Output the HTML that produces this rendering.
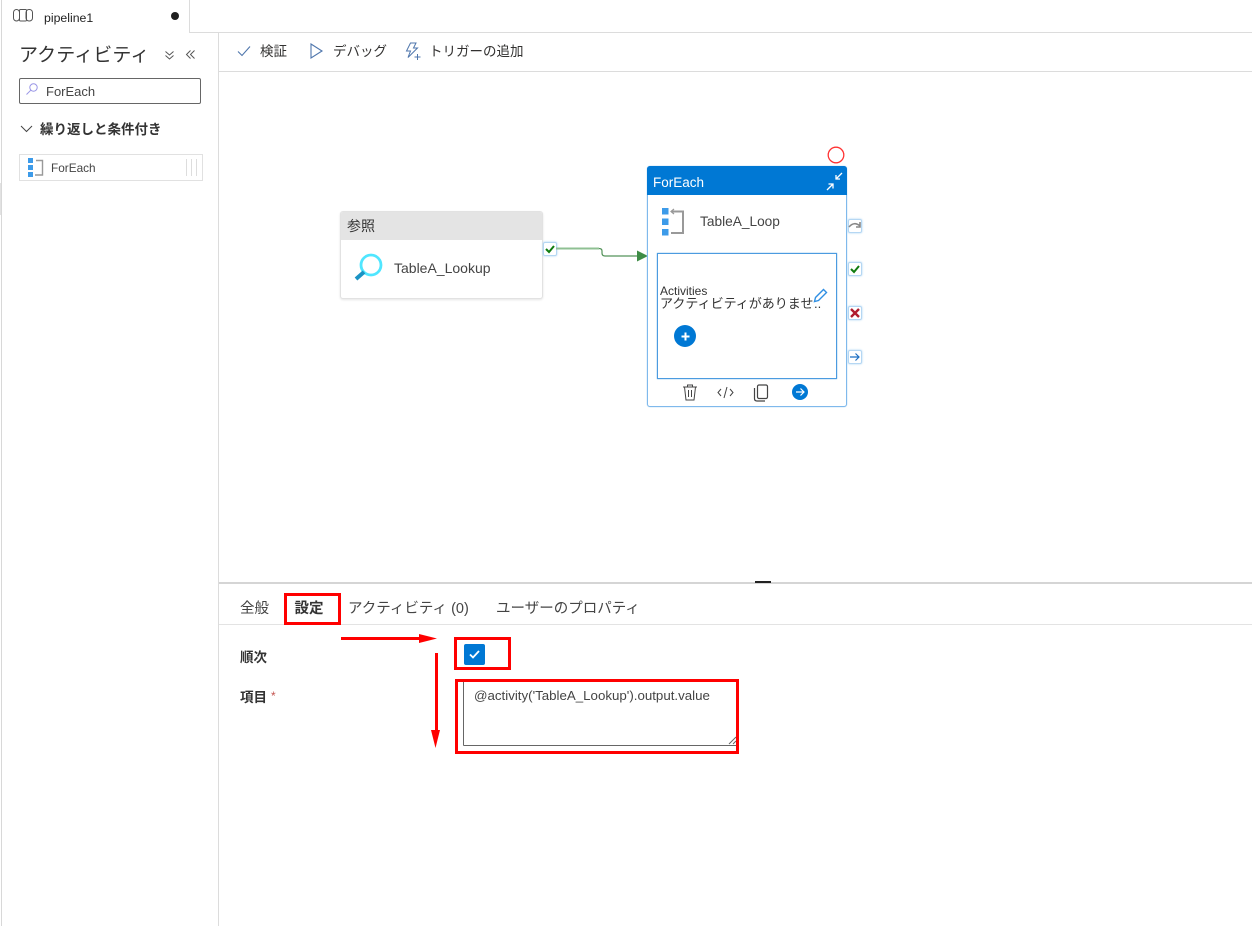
<!DOCTYPE html>
<html lang="ja"><head><meta charset="utf-8"><title>pipeline1</title>
<style>
html,body{margin:0;padding:0;background:#fff}
body{width:1252px;height:926px;position:relative;overflow:hidden;font-family:"Liberation Sans","Noto Sans CJK JP",sans-serif;color:#323130}
.a{position:absolute}
.t{position:absolute;white-space:nowrap;line-height:1}
.l{position:absolute;background:#dcdcdc}
.r{position:absolute;border:3px solid #f00;box-sizing:border-box}
svg{position:absolute;overflow:visible}
.port{position:absolute;width:12px;height:12px;background:#fff;border:1px solid #b5d7f3;box-shadow:0 0 2px #a9d2f3;border-radius:2px}
</style></head><body>
<!-- frame lines -->
<div class="l" style="left:1px;top:0;width:1px;height:926px;background:#d8d8d8"></div>
<div class="l" style="left:0;top:183px;width:1px;height:32px;background:#e2e2e2"></div>
<div class="l" style="left:189px;top:0;width:1px;height:33px"></div>
<div class="l" style="left:189px;top:32px;width:1063px;height:1px"></div>
<div class="l" style="left:218px;top:33px;width:1px;height:893px"></div>
<div class="l" style="left:219px;top:71px;width:1033px;height:1px"></div>
<div class="l" style="left:219px;top:582px;width:1033px;height:2px;background:#d5d5d5"></div>
<div class="a" style="left:755px;top:581px;width:16px;height:2px;background:#222"></div>
<div class="l" style="left:219px;top:624px;width:1033px;height:1px;background:#e3e3e3"></div>

<!-- tab -->
<svg style="left:13px;top:9px" width="20" height="13" viewBox="0 0 20 13" fill="none" stroke="#555" stroke-width="1"><rect x="0.5" y="0.5" width="6" height="11.5" rx="3"/><rect x="6.5" y="0.5" width="7" height="11.5" rx="1"/><rect x="13" y="0.5" width="6.5" height="11.5" rx="3"/></svg>
<div class="t" style="left:44px;top:12px;font-size:12.3px;color:#222">pipeline1</div>
<div class="a" style="left:171px;top:12px;width:8px;height:8px;border-radius:50%;background:#1f1f1f"></div>

<!-- sidebar -->
<div class="t" style="left:19px;top:46px;font-size:19px;color:#333;letter-spacing:.1px">アクティビティ</div>
<svg style="left:164px;top:50px" width="11" height="11" viewBox="0 0 11 11" fill="none" stroke="#555" stroke-width="1"><path d="M1.5 1.5L5.5 5L9.5 1.5M1.5 5.5L5.5 9L9.5 5.5"/></svg>
<svg style="left:185px;top:49px" width="11" height="11" viewBox="0 0 11 11" fill="none" stroke="#555" stroke-width="1"><path d="M5.5 1.5L1.5 5.5L5.5 9.5M9.5 1.5L5.5 5.5L9.5 9.5"/></svg>
<div class="a" style="left:19px;top:78px;width:182px;height:26px;box-sizing:border-box;border:1px solid #666;border-radius:2px"></div>
<svg style="left:25px;top:82px" width="15" height="15" viewBox="0 0 15 15" fill="none" stroke="#9a96e6" stroke-width="1"><circle cx="8.5" cy="5.5" r="3.7"/><path d="M5.8 8.2L1.5 12.5"/></svg>
<div class="t" style="left:46px;top:85px;font-size:13px;color:#444">ForEach</div>
<svg style="left:20px;top:124px" width="13" height="10" viewBox="0 0 13 10" fill="none" stroke="#444" stroke-width="1"><path d="M1 2L6.5 7.5L12 2"/></svg>
<div class="t" style="left:40px;top:123px;font-size:13.5px;font-weight:700;color:#333">繰り返しと条件付き</div>
<div class="a" style="left:19px;top:154px;width:184px;height:27px;box-sizing:border-box;border:1px solid #e1e1e1"></div>
<svg style="left:28px;top:158px" width="17" height="20" viewBox="0 0 17 20"><rect x="0" y="0" width="5" height="5" fill="#3d9be9"/><rect x="0" y="7" width="5" height="5" fill="#3d9be9"/><rect x="0" y="14" width="5" height="5" fill="#3d9be9"/><path d="M8 2.5H14.5V17H7" fill="none" stroke="#999" stroke-width="1.4"/></svg>
<div class="t" style="left:51px;top:163px;font-size:11.8px;color:#444">ForEach</div>
<div class="a" style="left:186px;top:159px;width:1px;height:17px;background:#ddd;box-shadow:5px 0 #ddd,10px 0 #ddd"></div>

<!-- toolbar -->
<svg style="left:237px;top:45px" width="14" height="12" viewBox="0 0 14 12" fill="none" stroke="#4f76ac" stroke-width="1.1"><path d="M1 6.5L5 10.5L13 1.5"/></svg>
<div class="t" style="left:260px;top:44.5px;font-size:13.5px">検証</div>
<svg style="left:310px;top:43px" width="13" height="16" viewBox="0 0 13 16" fill="none" stroke="#4f76ac" stroke-width="1.1"><path d="M1 1L12 8L1 15Z"/></svg>
<div class="t" style="left:333px;top:44.5px;font-size:13.5px">デバッグ</div>
<svg style="left:405px;top:42px" width="16" height="19" viewBox="0 0 16 19" fill="none" stroke="#4f76ac" stroke-width="1"><path d="M5.5 1H11L8.5 6H12.5L3 15.5L5.5 9H1.5Z"/><path d="M12.5 12V18M9.5 15H15.5"/></svg>
<div class="t" style="left:429px;top:44.5px;font-size:13.5px">トリガーの追加</div>

<!-- lookup activity -->
<div class="a" style="left:340px;top:211px;width:203px;height:88px;box-sizing:border-box;border:1px solid #e2e2e2;border-radius:3px;box-shadow:0 1px 2px #e5e5e5;background:#fff"></div>
<div class="a" style="left:341px;top:212px;width:201px;height:28px;background:#e4e4e4;border-radius:2px 2px 0 0"></div>
<div class="t" style="left:347px;top:219px;font-size:14px;color:#333">参照</div>
<svg style="left:354px;top:251px" width="31" height="32" viewBox="0 0 31 32" fill="none"><circle cx="17" cy="14" r="10" stroke="#50e6ff" stroke-width="2.8"/><path d="M10 21L2 28" stroke="#1b93c4" stroke-width="4"/></svg>
<div class="t" style="left:394px;top:261px;font-size:14px;color:#444">TableA_Lookup</div>

<!-- connector -->
<div class="port" style="left:543px;top:242px"></div>
<svg style="left:545px;top:244px" width="10" height="10" viewBox="0 0 10 10" fill="none" stroke="#107c10" stroke-width="2"><path d="M1 5L4 8L9 2"/></svg>
<svg style="left:556px;top:240px" width="94" height="22" viewBox="0 0 94 22" fill="none"><path d="M0 8.5H43Q46 8.5 46 11V13Q46 16 49 16H83" stroke="#54935a" stroke-width="1.2"/><path d="M0 8.5H43" stroke="#8fc093" stroke-width="2"/><path d="M81 10.5L92 16L81 21.5Z" fill="#3e8c46"/></svg>

<!-- foreach -->
<div class="a" style="left:647px;top:166px;width:200px;height:241px;box-sizing:border-box;border:1px solid #7fb9ec;box-shadow:0 0 1px #7fb9ec;border-radius:3px;background:#fff"></div>
<div class="a" style="left:647px;top:166px;width:200px;height:29px;background:#0078d4;border-radius:3px 3px 0 0"></div>
<div class="t" style="left:653px;top:176px;font-size:13.5px;color:#fff">ForEach</div>
<svg style="left:825px;top:172px" width="19" height="19" viewBox="0 0 19 19" fill="none" stroke="#fff" stroke-width="1.3"><path d="M17 1L11 7M11 3V7H15M8 12L2 18M3.5 12H8V16.5"/></svg>
<svg style="left:827px;top:146px" width="18" height="18" viewBox="0 0 18 18" fill="none"><circle cx="9" cy="9" r="7.8" stroke="#f33" stroke-width="1.3"/></svg>
<svg style="left:662px;top:208px" width="23" height="28" viewBox="0 0 23 28"><rect x="0" y="0" width="6.5" height="6.5" fill="#3d9be9"/><rect x="0" y="10.5" width="6.5" height="6.5" fill="#3d9be9"/><rect x="0" y="21" width="6.5" height="6.5" fill="#3d9be9"/><path d="M9 3.5H21V25H9" fill="none" stroke="#999" stroke-width="2"/><path d="M12 1L9 3.5L12 6" fill="none" stroke="#999" stroke-width="1.2"/></svg>
<div class="t" style="left:700px;top:215px;font-size:13.7px;color:#444">TableA_Loop</div>
<div class="a" style="left:657px;top:253px;width:180px;height:126px;box-sizing:border-box;border:1px solid #4b9be0;box-shadow:0 0 1px #4b9be0"></div>
<div class="t" style="left:660px;top:285px;font-size:12px;color:#333">Activities</div>
<div class="t" style="left:660px;top:297px;font-size:13px;color:#333;width:155px;overflow:hidden">アクティビティがありませ</div>
<div class="t" style="left:814px;top:297px;font-size:13px;color:#333">..</div>
<svg style="left:813px;top:288px" width="15" height="15" viewBox="0 0 15 15" fill="none" stroke="#2f8fe3" stroke-width="1.4"><path d="M1.5 13.5L2.5 9.5L10.5 1.5L13.5 4.5L5.5 12.5Z"/></svg>
<div class="a" style="left:674px;top:325px;width:22px;height:22px;border-radius:50%;background:#0078d4"></div>
<svg style="left:680.5px;top:331.5px" width="9" height="9" viewBox="0 0 9 9" stroke="#fff" stroke-width="2"><path d="M4.5 0.5V8.5M0.5 4.5H8.5"/></svg>
<svg style="left:682px;top:384px" width="16" height="17" viewBox="0 0 16 17" fill="none" stroke="#444" stroke-width="1"><path d="M1 3H15M5.5 3V1H10.5V3M2.5 3L4 16H12L13.5 3M6.5 6V13M9.5 6V13"/></svg>
<svg style="left:717px;top:386px" width="17" height="13" viewBox="0 0 17 13" fill="none" stroke="#444" stroke-width="1"><path d="M4 3L1 6.5L4 10M13 3L16 6.5L13 10M10 1L7 12"/></svg>
<svg style="left:753px;top:384px" width="16" height="18" viewBox="0 0 16 18" fill="none" stroke="#444" stroke-width="1.2"><rect x="4.5" y="1" width="10" height="13.5" rx="1.5"/><path d="M1.5 4V14.5Q1.5 17 4 17H12"/></svg>
<div class="a" style="left:792px;top:384px;width:16px;height:16px;border-radius:50%;background:#0078d4"></div>
<svg style="left:795px;top:387px" width="10" height="10" viewBox="0 0 10 10" fill="none" stroke="#fff" stroke-width="1.2"><path d="M1 5H9M5.5 1.5L9 5L5.5 8.5"/></svg>

<!-- right ports -->
<div class="port" style="left:848px;top:219px"></div>
<svg style="left:848px;top:221px" width="14" height="10" viewBox="0 0 14 10" fill="none" stroke="#888" stroke-width="1.6"><path d="M1 6Q6 0 12 5M12 1V6H8"/></svg>
<div class="port" style="left:848px;top:262px"></div>
<svg style="left:850px;top:264px" width="10" height="10" viewBox="0 0 10 10" fill="none" stroke="#107c10" stroke-width="2"><path d="M1 5L4 8L9 2"/></svg>
<div class="port" style="left:848px;top:306px"></div>
<svg style="left:850px;top:308px" width="10" height="10" viewBox="0 0 10 10" fill="none" stroke="#b01c2e" stroke-width="2.4"><path d="M1 1L9 9M9 1L1 9"/></svg>
<div class="port" style="left:848px;top:350px"></div>
<svg style="left:850px;top:352px" width="10" height="10" viewBox="0 0 10 10" fill="none" stroke="#1b6ec2" stroke-width="1.2"><path d="M0 5H9M5.5 1.5L9 5L5.5 8.5"/></svg>

<!-- tabs -->
<div class="t" style="left:240px;top:601.5px;font-size:14.5px;color:#444">全般</div>
<div class="t" style="left:294.5px;top:601.5px;font-size:14.5px;font-weight:700;color:#333">設定</div>
<div class="t" style="left:348px;top:601.5px;font-size:14.5px;color:#444">アクティビティ (0)</div>
<div class="t" style="left:496px;top:601.5px;font-size:14.5px;color:#444">ユーザーのプロパティ</div>
<div class="r" style="left:284px;top:593px;width:57px;height:32px"></div>

<!-- form -->
<div class="t" style="left:240px;top:650.5px;font-size:13.5px;font-weight:700;color:#333">順次</div>
<div class="t" style="left:240px;top:690.5px;font-size:13.5px;font-weight:700;color:#333">項目</div>
<div class="t" style="left:271px;top:690px;font-size:12px;color:#c4544f">*</div>
<div class="a" style="left:464px;top:644px;width:21px;height:21px;background:#0078d4;border-radius:2px"></div>
<svg style="left:469px;top:650px" width="11" height="9" viewBox="0 0 11 9" fill="none" stroke="#fff" stroke-width="1.8"><path d="M1 4.5L4 7.5L10 1"/></svg>
<div class="r" style="left:454px;top:637px;width:57px;height:33px"></div>
<div class="a" style="left:463px;top:681px;width:275px;height:65px;box-sizing:border-box;border:1px solid #666;border-radius:1px;background:#fff"></div>
<div class="t" style="left:474px;top:689px;font-size:13.3px;color:#444">@activity('TableA_Lookup').output.value</div>
<svg style="left:728px;top:736px" width="9" height="9" viewBox="0 0 9 9" fill="none" stroke="#666" stroke-width="1"><path d="M1 8L8 1M5 8L8 5"/></svg>
<div class="r" style="left:455px;top:679px;width:284px;height:75px"></div>

<!-- annotation arrows -->
<div class="a" style="left:341px;top:637px;width:82px;height:3px;background:#f00"></div>
<svg style="left:419px;top:634px" width="18" height="9" viewBox="0 0 18 9"><path d="M0 0L18 4.5L0 9Z" fill="#f00"/></svg>
<div class="a" style="left:434.5px;top:653px;width:3px;height:80px;background:#f00"></div>
<svg style="left:431px;top:730px" width="9" height="18" viewBox="0 0 9 18"><path d="M0 0H9L4.5 18Z" fill="#f00"/></svg>
</body></html>
